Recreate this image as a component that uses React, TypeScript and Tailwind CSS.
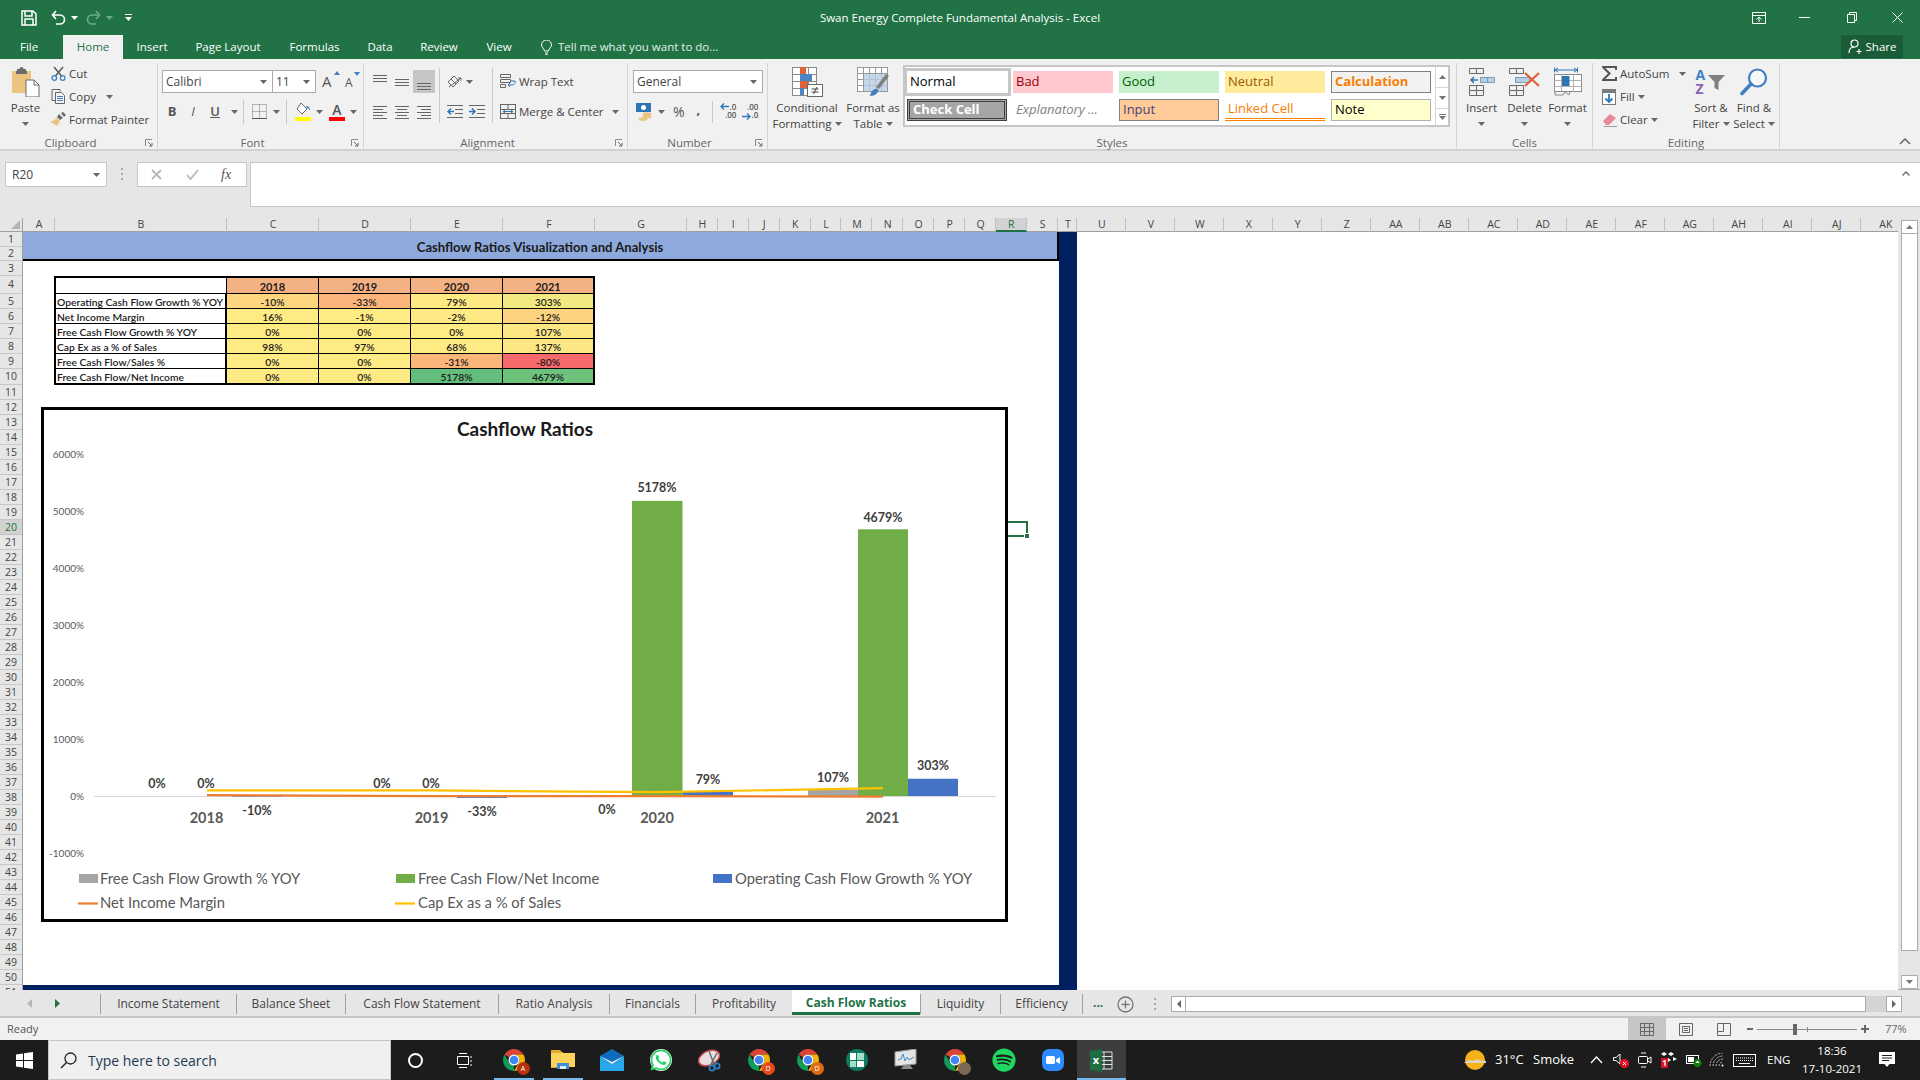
import React from "react";
import { FaWhatsapp, FaSpotify } from "react-icons/fa";

const Caret = ({ c = "#666" }: { c?: string }) => (
  <svg width="7" height="4" viewBox="0 0 7 4" className="shrink-0"><path d="M0 0h7L3.5 4z" fill={c} /></svg>
);

const Launcher = () => (
  <svg width="8" height="8" viewBox="0 0 8 8" className="absolute right-[4px] bottom-[3px]">
    <path d="M.5 7V.5H7" fill="none" stroke="#8a8a8a" />
    <path d="M3 3l4 4M7 4v3H4" fill="none" stroke="#6a6a6a" />
  </svg>
);

const Group = ({ w, label, launcher, children }: { w: string; label: string; launcher?: boolean; children: React.ReactNode }) => (
  <div className={`${w} h-[87px] mt-[4px] shrink-0 border-r border-[#d4d4d4] flex flex-col relative`}>
    <div className="h-[73px] flex">{children}</div>
    <div className={`h-[14px] leading-[14px] text-center text-[#666] text-[11.5px] ${launcher ? "pr-[16px]" : ""}`}>{label}</div>
    {launcher && <Launcher />}
  </div>
);

const Big = ({ w, icon, l1, l2, caret2 }: { w: string; icon: React.ReactNode; l1: string; l2?: string; caret2?: boolean }) => (
  <div className={`${w} flex flex-col items-center shrink-0`}>
    <div className="h-[30px] mt-[4px] flex items-center justify-center">{icon}</div>
    <div className="mt-[3px] leading-[16px] whitespace-nowrap">{l1}</div>
    <div className="leading-[16px] h-[16px] whitespace-nowrap flex items-center gap-[3px]">
      {l2}
      {caret2 !== false && <Caret />}
    </div>
  </div>
);

const Small = ({ icon, text, caret, caretGap = "ml-[3px]" }: { icon: React.ReactNode; text: string; caret?: boolean; caretGap?: string }) => (
  <div className="h-[23px] flex items-center whitespace-nowrap">
    <span className="w-[18px] mr-[2px] flex justify-center">{icon}</span>
    <span>{text}</span>
    {caret && <span className={caretGap}><Caret /></span>}
  </div>
);

const Lines = ({ ys, offs }: { ys: number[]; offs: number[][] }) => (
  <svg width="18" height="16" viewBox="0 0 18 16">
    {ys.map((y, i) => (
      <path key={i} d={`M${offs[i][0]} ${y}.5H${offs[i][1]}`} stroke="#666" strokeWidth="1" />
    ))}
  </svg>
);

const Clip = () => (
  <svg width="29" height="30" viewBox="0 0 29 30">
    <path d="M1 4h19v22H2a1 1 0 0 1-1-1z" fill="#EBC57F" />
    <path d="M6 4h9V2H12.5a2 2 0 0 0-4 0H6z" fill="#6b6b6b" />
    <rect x="5" y="4" width="11" height="3" fill="#6b6b6b" />
    <path d="M15 13h8l5 5v12H15z" fill="#fff" stroke="#6a6a6a" />
    <path d="M23 13v5h5" fill="none" stroke="#6a6a6a" />
  </svg>
);
const Scissors = () => (
  <svg width="15" height="15" viewBox="0 0 15 15">
    <path d="M3 1l7.5 9M12 1L4.5 10" stroke="#5f5f5f" strokeWidth="1.6" fill="none" />
    <circle cx="3.3" cy="12" r="2.3" fill="none" stroke="#3f7fc0" strokeWidth="1.3" />
    <circle cx="11.7" cy="12" r="2.3" fill="none" stroke="#3f7fc0" strokeWidth="1.3" />
  </svg>
);
const Copy = () => (
  <svg width="15" height="15" viewBox="0 0 15 15" fill="none" stroke="#666">
    <path d="M9 2.5V.5H1v11h3" />
    <path d="M4.5 3.5h6l3 3v8h-9z" fill="#f4f4f4" />
    <path d="M6 7.5h6M6 9.5h6M6 11.5h6" stroke="#3f7fc0" />
  </svg>
);
const Painter = () => (
  <svg width="16" height="15" viewBox="0 0 16 15">
    <path d="M9 2l4 4-3 2-3-3z" fill="#6a6a6a" />
    <path d="M11 1l2-1 3 3-2 2z" fill="#6a6a6a" />
    <path d="M6.5 5.5l3.5 3.5-3 5-7-4.5c3 0 5-1.5 6.5-4z" fill="#EBC57F" />
  </svg>
);
const CondIcon = () => (
  <svg width="31" height="30" viewBox="0 0 31 30">
    <g fill="#fff" stroke="#8a8a8a">
      {[0, 7, 14, 21].map((y) => [0, 8, 16].map((x) => <rect key={`${x}-${y}`} x={x + 0.5} y={y + 0.5} width="8" height="7" />))}
    </g>
    <rect x="8" y="0" width="6" height="7" fill="#E0623B" />
    <rect x="8" y="7" width="12" height="7" fill="#4a86c6" />
    <rect x="8" y="14" width="8" height="7" fill="#E0623B" />
    <rect x="8" y="21" width="4" height="7" fill="#4a86c6" />
    <rect x="15.5" y="17.5" width="15" height="12" fill="#fff" stroke="#6a6a6a" />
    <path d="M19.5 22h7M19.5 25h7M25 20l-3.500 7" fill="none" stroke="#444" />
  </svg>
);
const TableIcon = () => (
  <svg width="32" height="30" viewBox="0 0 32 30">
    <g fill="#fff" stroke="#9a9a9a">
      {[0, 6, 12, 18].map((y) => [0, 6, 12, 18, 24].map((x) => <rect key={`${x}-${y}`} x={x + 0.5} y={y + 0.5} width="6" height="6" />))}
    </g>
    <rect x="7" y="7" width="23" height="17" fill="#B9CDE5" opacity=".8" />
    <path d="M19 20l10-13 3 2-10 13z" fill="#7f7f7f" />
    <path d="M13 29c1-5 4-8 8-7 1 4-3 7-8 7z" fill="#3f7fc0" />
  </svg>
);
const InsertIcon = () => (
  <svg width="27" height="28" viewBox="0 0 27 28" fill="none" stroke="#6a6a6a">
    <path d="M1.5.5h14v5h-14zM8.5.5v5M1.5 17.5h14v10h-14zM1.5 22.5h14M8.5 17.5v10" />
    <path d="M12.5 9.5h14v5h-14zM19.5 9.5v5" fill="#B9CDE5" stroke="#7a9cc0" />
    <path d="M10 12H3M6 9l-3 3 3 3" stroke="#2f75b5" strokeWidth="1.5" />
  </svg>
);
const DeleteIcon = () => (
  <svg width="32" height="28" viewBox="0 0 32 28" fill="none" stroke="#6a6a6a">
    <path d="M.5.5h14v5H.5zM7.5.5v5M.5 17.5h14v10H.5zM.5 22.5h14M7.5 17.5v10" />
    <rect x="6.5" y="9.5" width="14" height="5" fill="#B9CDE5" stroke="#7a9cc0" />
    <path d="M16 5l14 13M30 5L16 18" stroke="#E0623B" strokeWidth="2.2" />
  </svg>
);
const FormatIcon = () => (
  <svg width="28" height="30" viewBox="0 0 28 30" fill="none">
    <path d="M1 3h22M1 3l3-2M1 3l3 2M23 3l-3-2M23 3l-3 2" stroke="#2f75b5" />
    <path d="M.5.5v5M23.5.5v5" stroke="#2f75b5" />
    <rect x=".5" y="7.5" width="27" height="17" fill="#fff" stroke="#8a8a8a" />
    <path d="M7.5 7.5v17M19.5 7.5v17M.5 13.5h27M.5 19.5h27" stroke="#b0b0b0" />
    <rect x="8" y="9" width="7.5" height="10" fill="#2f75b5" />
    <path d="M1 25v3h8l2-3 4 3 1-3" stroke="#8a8a8a" />
  </svg>
);
const Sigma = () => (
  <svg width="15" height="15" viewBox="0 0 15 15"><path d="M14 4V1H1l6.5 6.5L1 14h13v-3" fill="none" stroke="#555" strokeWidth="2" /></svg>
);
const FillIcon = () => (
  <svg width="14" height="16" viewBox="0 0 14 16" fill="none">
    <rect x=".5" y=".5" width="13" height="15" fill="#fff" stroke="#7a7a7a" />
    <rect x="1" y="1" width="12" height="3" fill="#7a7a7a" />
    <path d="M7 5v8M3.5 9.5L7 13l3.5-3.5" stroke="#2f75b5" strokeWidth="1.8" />
  </svg>
);
const Eraser = () => (
  <svg width="15" height="14" viewBox="0 0 15 14">
    <path d="M1 8l7-7 6 4-7 7H4z" fill="#E88A9C" />
    <path d="M2 13.5h13" stroke="#999" />
  </svg>
);
const SortIcon = () => (
  <div className="w-[31px] h-[28px] relative flex flex-col text-[14px] font-bold leading-[14px]">
    <span className="text-[#3f7fc0]">A</span>
    <span className="text-[#8e62b5]">Z</span>
    <svg width="17" height="15" viewBox="0 0 17 15" className="absolute left-[12px] top-[7px]"><path d="M0 0h17l-6.500 7v8l-4-2V7z" fill="#7f7f7f" /></svg>
  </div>
);
const FindIcon = () => (
  <svg width="28" height="28" viewBox="0 0 28 28" fill="none">
    <circle cx="17.5" cy="10" r="8.5" stroke="#3f7fc0" strokeWidth="2.2" fill="#fff" fillOpacity=".5" />
    <path d="M11 16L2 25.5" stroke="#3f7fc0" strokeWidth="3.5" strokeLinecap="round" />
  </svg>
);
const BorderIcon = () => (
  <svg width="15" height="15" viewBox="0 0 15 15" fill="none" stroke="#777" strokeDasharray="1 1">
    <path d="M.5.5h14v14H.5zM7.5.5v14M.5 7.5h14" />
    <path d="M0 14.5h15" strokeDasharray="none" stroke="#555" />
  </svg>
);
const Bucket = () => (
  <svg width="16" height="19" viewBox="0 0 16 19">
    <path d="M6 1l6 6-5 5-5-5z" fill="#fff" stroke="#666" />
    <path d="M11 4c3 0 4 2 4 5-1-2-2-3-3-3z" fill="#3f7fc0" />
    <rect y="15" width="16" height="4" fill="#FFFF00" />
  </svg>
);
const FontColor = () => (
  <div className="w-[16px] h-[19px] relative flex flex-col items-center">
    <span className="text-[14px] font-semibold leading-[15px] text-[#555]">A</span>
    <div className="w-[16px] h-[4px] bg-[#FF0000]" />
  </div>
);
const Orient = () => (
  <svg width="16" height="14" viewBox="0 0 16 14" fill="none" stroke="#666">
    <path d="M1 7l6-6 5 5-6 6z" />
    <path d="M4 4l5 5M2 12l12-9M14 3l-3 0M14 3l0 3" />
  </svg>
);
const Indent = ({ out }: { out?: boolean }) => (
  <svg width="16" height="13" viewBox="0 0 16 13" fill="none">
    <path d="M0 .5h16M8 4.5h8M8 8.5h8M0 12.5h16" stroke="#666" />
    {out ? <path d="M7 6.5H1M4 3.5l-3 3 3 3" stroke="#2f75b5" strokeWidth="1.5" /> : <path d="M0 6.5h6M3 3.5l3 3-3 3" stroke="#2f75b5" strokeWidth="1.5" />}
  </svg>
);
const Wrap = () => (
  <svg width="16" height="15" viewBox="0 0 16 15" fill="none">
    <path d="M.5.5h10v3H.5zM.5 5.5h10v3H.5zM.5 10.5h5v3H.5z" stroke="#666" />
    <path d="M11 7h4c1 2-1 4-3 4H8M10 9l-2 2 2 2" stroke="#2f75b5" />
  </svg>
);
const Merge = () => (
  <svg width="16" height="15" viewBox="0 0 16 15" fill="none" stroke="#666">
    <rect x=".5" y=".5" width="15" height="14" />
    <path d="M.5 5.5h15M.5 9.5h15M8 .5v5M8 9.5v5" />
    <path d="M3 7.5h10M3 7.5l2-1.5M3 7.5l2 1.5M13 7.5l-2-1.5M13 7.5l-2 1.5" stroke="#2f75b5" />
  </svg>
);
const Money = () => (
  <svg width="17" height="18" viewBox="0 0 17 18">
    <rect x="0" y="0" width="15" height="9" fill="#2f75b5" />
    <circle cx="7.5" cy="4.5" r="2.5" fill="#fff" />
    <ellipse cx="11" cy="11" rx="4.5" ry="1.8" fill="#EBC57F" />
    <ellipse cx="11" cy="13.5" rx="4.5" ry="1.8" fill="#EBC57F" />
    <ellipse cx="7" cy="16" rx="4.5" ry="1.8" fill="#EBC57F" />
  </svg>
);
const DecInc = () => (
  <div className="w-[16px] h-[17px] relative text-[8px] leading-[8px] font-semibold text-[#555] flex flex-col items-end">
    <span>.0</span>
    <span>.00</span>
    <svg width="9" height="7" viewBox="0 0 9 7" className="absolute left-0 top-0"><path d="M9 3.5H1M4 .5l-3 3 3 3" fill="none" stroke="#2f75b5" strokeWidth="1.3" /></svg>
  </div>
);
const DecDec = () => (
  <div className="w-[16px] h-[17px] relative text-[8px] leading-[8px] font-semibold text-[#555] flex flex-col items-end">
    <span>.00</span>
    <span>.0</span>
    <svg width="9" height="7" viewBox="0 0 9 7" className="absolute left-0 bottom-0"><path d="M0 3.5h8M5 .5l3 3-3 3" fill="none" stroke="#2f75b5" strokeWidth="1.3" /></svg>
  </div>
);

const styleCells: { t: string; c: string }[] = [
  { t: "Normal", c: "bg-white border-[3px] border-[#c6c6c6] text-black ml-[-3px] mt-[-3px] !h-[28px] w-[107px] pl-[3px]" },
  { t: "Bad", c: "bg-[#FFC7CE] text-[#9C0006] pl-[3px]" },
  { t: "Good", c: "bg-[#C6EFCE] text-[#006100] pl-[3px]" },
  { t: "Neutral", c: "bg-[#FFEB9C] text-[#9C5700] pl-[3px]" },
  { t: "Calculation", c: "bg-[#F2F2F2] border border-[#7F7F7F] text-[#FA7D00] font-bold pl-[3px]" },
  { t: "Check Cell", c: "bg-[#A5A5A5] border-[3px] border-double border-[#3F3F3F] text-white font-bold pl-[3px]" },
  { t: "Explanatory ...", c: "bg-white text-[#7F7F7F] italic pl-[3px]" },
  { t: "Input", c: "bg-[#FFCC99] border border-[#7F7F7F] text-[#3F3F76] pl-[3px]" },
  { t: "Linked Cell", c: "bg-white border-b-[3px] border-double border-[#FF8001] text-[#FA7D00] pl-[3px]" },
  { t: "Note", c: "bg-[#FFFFCC] border border-[#B2B2B2] text-black pl-[3px]" },
];

const Ribbon = () => (
  <div className="h-[92px] bg-[#f1f1f1] border-b-2 border-[#d2d2d2] flex text-[11.5px] text-[#444] shrink-0 box-border">
    <Group w="w-[158px]" label="Clipboard" launcher>
      <div className="w-[49px] pl-[2px]"><Big w="w-[47px]" icon={<Clip />} l1="Paste" /></div>
      <div className="flex flex-col mt-[-1px]">
        <Small icon={<Scissors />} text="Cut" />
        <Small icon={<Copy />} text="Copy" caret caretGap="ml-[10px]" />
        <Small icon={<Painter />} text="Format Painter" />
      </div>
    </Group>
    <Group w="w-[206px]" label="Font" launcher>
      <div className="pt-[7px] pl-[4px] flex flex-col gap-[7px] text-[12px]">
        <div className="flex items-center h-[23px]">
          <div className="w-[111px] h-[23px] bg-white border border-[#ababab] flex items-center justify-between px-[3px]"><span>Calibri</span><span className="mr-[2px]"><Caret /></span></div>
          <div className="w-[43px] h-[23px] bg-white border border-[#ababab] border-l-0 flex items-center justify-between px-[3px]"><span>11</span><span className="mr-[2px]"><Caret /></span></div>
          <span className="ml-[6px] text-[15px] text-[#555] relative w-[15px]">A<svg width="6" height="4" viewBox="0 0 6 4" className="absolute right-[-3px] top-[1px]"><path d="M0 4h6L3 0z" fill="#3f7fc0" /></svg></span>
          <span className="ml-[8px] text-[12px] text-[#555] relative w-[13px] mt-[2px]">A<svg width="6" height="4" viewBox="0 0 6 4" className="absolute right-[-2px] top-[-2px]"><path d="M0 0h6L3 4z" fill="#3f7fc0" /></svg></span>
        </div>
        <div className="flex items-center h-[23px] text-[#555]">
          <span className="w-[20px] text-center font-bold text-[13px]">B</span>
          <span className="w-[22px] text-center italic text-[13px]">I</span>
          <span className="w-[22px] text-center underline font-semibold text-[13px]">U</span>
          <span className="ml-[5px]"><Caret /></span>
          <div className="w-px h-[24px] bg-[#c8c8c8] ml-[5px]" />
          <span className="ml-[8px]"><BorderIcon /></span>
          <span className="ml-[6px]"><Caret /></span>
          <div className="w-px h-[24px] bg-[#c8c8c8] ml-[6px]" />
          <span className="ml-[8px]"><Bucket /></span>
          <span className="ml-[5px]"><Caret /></span>
          <span className="ml-[6px]"><FontColor /></span>
          <span className="ml-[5px]"><Caret /></span>
        </div>
      </div>
    </Group>
    <Group w="w-[264px]" label="Alignment" launcher>
      <div className="pt-[7px] pl-[5px] flex flex-col gap-[7px]">
        <div className="flex h-[23px]">
          <div className="w-[22px] flex items-center justify-center"><Lines ys={[1, 4, 7]} offs={[[2, 16], [2, 16], [2, 16]]} /></div>
          <div className="w-[22px] flex items-center justify-center"><Lines ys={[5, 8, 11]} offs={[[2, 16], [2, 16], [2, 16]]} /></div>
          <div className="w-[22px] bg-[#c6c6c6] flex items-center justify-center"><Lines ys={[9, 12, 15]} offs={[[2, 16], [2, 16], [2, 16]]} /></div>
        </div>
        <div className="flex h-[23px]">
          <div className="w-[22px] flex items-center justify-center"><Lines ys={[2, 5, 8, 11, 14]} offs={[[2, 16], [2, 12], [2, 16], [2, 12], [2, 16]]} /></div>
          <div className="w-[22px] flex items-center justify-center"><Lines ys={[2, 5, 8, 11, 14]} offs={[[2, 16], [4, 14], [2, 16], [4, 14], [2, 16]]} /></div>
          <div className="w-[22px] flex items-center justify-center"><Lines ys={[2, 5, 8, 11, 14]} offs={[[2, 16], [6, 16], [2, 16], [6, 16], [2, 16]]} /></div>
        </div>
      </div>
      <div className="w-px h-[55px] bg-[#c8c8c8] mt-[5px] ml-[4px]" />
      <div className="pt-[7px] pl-[7px] w-[52px] flex flex-col gap-[7px]">
        <div className="h-[23px] flex items-center gap-[3px]"><Orient /><Caret /></div>
        <div className="h-[23px] flex items-center gap-[6px]"><Indent out /><Indent /></div>
      </div>
      <div className="w-px h-[55px] bg-[#c8c8c8] mt-[5px]" />
      <div className="pt-[7px] pl-[7px] flex flex-col gap-[7px]">
        <div className="h-[23px] flex items-center gap-[3px] whitespace-nowrap"><Wrap /><span>Wrap Text</span></div>
        <div className="h-[23px] flex items-center gap-[3px] whitespace-nowrap"><Merge /><span>Merge &amp; Center</span><span className="ml-[5px]"><Caret /></span></div>
      </div>
    </Group>
    <Group w="w-[140px]" label="Number" launcher>
      <div className="pt-[7px] pl-[5px] flex flex-col gap-[7px] text-[12px]">
        <div className="w-[130px] h-[23px] bg-white border border-[#ababab] flex items-center justify-between px-[3px]"><span>General</span><span className="mr-[2px]"><Caret /></span></div>
        <div className="h-[23px] flex items-center text-[#555]">
          <span className="ml-[3px]"><Money /></span>
          <span className="ml-[5px]"><Caret /></span>
          <span className="ml-[8px] text-[14px]">%</span>
          <span className="ml-[12px] font-bold text-[13px] mt-[-4px]">,</span>
          <div className="w-px h-[22px] bg-[#c8c8c8] ml-[12px] mr-[7px]" />
          <DecInc />
          <span className="ml-[6px]"><DecDec /></span>
        </div>
      </div>
    </Group>
    <Group w="w-[689px]" label="Styles">
      <Big w="w-[78px]" icon={<CondIcon />} l1="Conditional" l2="Formatting" />
      <Big w="w-[54px]" icon={<TableIcon />} l1="Format as" l2="Table" />
      <div className="ml-[3px] mt-[2px] w-[547px] h-[62px] bg-white border-2 border-[#c6c6c6] flex text-[13px]">
        <div className="w-[530px] pl-[2px] pt-[4px] grid grid-cols-[100px_100px_100px_100px_100px] grid-rows-[22px_22px] gap-x-[6px] gap-y-[6px]">
          {styleCells.map((s) => (
            <div key={s.t} className={`${s.c} h-[22px] flex items-center whitespace-nowrap overflow-hidden box-border`}>{s.t}</div>
          ))}
        </div>
        <div className="flex-1 flex flex-col border-l border-[#d8d8d8]">
          <div className="h-[21px] border-b border-[#d8d8d8] flex items-center justify-center"><svg width="7" height="4" viewBox="0 0 7 4"><path d="M0 4h7L3.5 0z" fill="#777" /></svg></div>
          <div className="h-[21px] border-b border-[#d8d8d8] flex items-center justify-center"><Caret c="#777" /></div>
          <div className="flex-1 flex flex-col items-center justify-center gap-[1px]"><div className="w-[7px] h-px bg-[#777]" /><Caret c="#777" /></div>
        </div>
      </div>
    </Group>
    <Group w="w-[136px]" label="Cells">
      <div className="pl-[3px] flex">
        <Big w="w-[43px]" icon={<InsertIcon />} l1="Insert" />
        <Big w="w-[43px]" icon={<DeleteIcon />} l1="Delete" />
        <Big w="w-[43px]" icon={<FormatIcon />} l1="Format" />
      </div>
    </Group>
    <Group w="w-[187px]" label="Editing">
      <div className="w-[95px] pl-[7px] flex flex-col mt-[-1px]">
        <Small icon={<Sigma />} text="AutoSum" caret caretGap="ml-[10px]" />
        <Small icon={<FillIcon />} text="Fill" caret />
        <Small icon={<Eraser />} text="Clear" caret />
      </div>
      <Big w="w-[46px]" icon={<SortIcon />} l1="Sort &" l2="Filter" />
      <Big w="w-[40px]" icon={<FindIcon />} l1="Find &" l2="Select" />
    </Group>
    <div className="flex-1 flex items-end justify-end pr-[9px] pb-[4px]">
      <svg width="12" height="7" viewBox="0 0 12 7"><path d="M1 6l5-5 5 5" fill="none" stroke="#666" strokeWidth="1.5" /></svg>
    </div>
  </div>
);

const TitleBar = () => (
  <div className="h-[35px] grid grid-cols-[1fr_auto_1fr] items-center text-white shrink-0">
    <div className="flex items-center pl-[21px]">
      <svg width="16" height="16" viewBox="0 0 16 16" fill="none" stroke="#fff" strokeWidth="1.5"><path d="M1 1h11l3 3v11H1z" /><path d="M4 1v5h7V1M4 15v-6h8v6" /></svg>
      <svg width="15" height="15" viewBox="0 0 15 15" fill="none" stroke="#fff" strokeWidth="1.6" className="ml-[14px]"><path d="M5 1L1.5 5 5 9M2 5h7a4.5 4.5 0 0 1 0 9H5" /></svg>
      <span className="ml-[5px]"><Caret c="#fff" /></span>
      <svg width="15" height="15" viewBox="0 0 15 15" fill="none" stroke="#6fa98a" strokeWidth="1.6" className="ml-[8px]"><path d="M10 1l3.5 4L10 9M13 5H6a4.5 4.5 0 0 0 0 9h4" /></svg>
      <span className="ml-[5px]"><Caret c="#6fa98a" /></span>
      <svg width="7" height="8" viewBox="0 0 7 8" className="ml-[12px]"><path d="M0 0h7v1H0zM0 3h7L3.5 7z" fill="#fff" /></svg>
    </div>
    <div className="text-[11.5px] whitespace-nowrap">Swan Energy Complete Fundamental Analysis - Excel</div>
    <div className="flex items-center justify-end">
      <svg width="14" height="12" viewBox="0 0 14 12" fill="none" stroke="#fff" className="mr-[33px]"><path d="M.5.5h13v11H.5zM.5 3.5h13M7 10V5M4.5 7.5L7 5l2.5 2.5" /></svg>
      <svg width="11" height="1" viewBox="0 0 11 1" className="mr-[37px]"><path d="M0 .5h11" stroke="#fff" /></svg>
      <svg width="10" height="11" viewBox="0 0 10 11" fill="none" stroke="#fff" className="mr-[35px]"><path d="M.5 2.5h7v8h-7zM2.5 2.5v-2h7v8h-2" /></svg>
      <svg width="11" height="11" viewBox="0 0 11 11" stroke="#fff" className="mr-[17px]"><path d="M.5.5l10 10M10.5.5l-10 10" /></svg>
    </div>
  </div>
);

const tabs: { t: string; w: string }[] = [
  { t: "Insert", w: "w-[58px]" },
  { t: "Page Layout", w: "w-[94px]" },
  { t: "Formulas", w: "w-[79px]" },
  { t: "Data", w: "w-[52px]" },
  { t: "Review", w: "w-[66px]" },
  { t: "View", w: "w-[54px]" },
];

const TabsRow = () => (
  <div className="h-[24px] flex text-white text-[11.5px] shrink-0">
    <div className="w-[63px] pl-[20px] leading-[24px]">File</div>
    <div className="w-[60px] bg-[#f1f1f1] text-[#217346] text-center leading-[24px]">Home</div>
    {tabs.map((t) => (
      <div key={t.t} className={`${t.w} text-center leading-[24px]`}>{t.t}</div>
    ))}
    <div className="ml-[15px] flex items-center gap-[6px] text-[#e2efe8]">
      <svg width="11" height="15" viewBox="0 0 11 15" fill="none" stroke="#fff"><path d="M3.5 11C3 8 .5 7.5.5 5a5 5 0 0 1 10 0c0 2.5-2.5 3-3 6zM4 13h3M4.5 14.5h2" /></svg>
      <span>Tell me what you want to do...</span>
    </div>
    <div className="ml-auto mr-[17px] w-[62px] h-[23px] bg-[#1b5c38] flex items-center justify-center gap-[3px]">
      <svg width="15" height="15" viewBox="0 0 15 15" fill="none" stroke="#fff" strokeWidth="1.2"><circle cx="6.5" cy="4.5" r="3.5" /><path d="M1 14c0-4 2-6 5.5-6M11 10v5M8.5 12.5h5" /></svg>
      <span>Share</span>
    </div>
  </div>
);

const FormulaRow = () => (
  <div className="h-[67px] bg-[#e6e6e6] flex shrink-0 pt-[11px] pl-[5px] text-[12px]">
    <div className="w-[102px] h-[25px] bg-white border border-[#c6c6c6] flex items-center justify-between pl-[6px] pr-[6px] text-[#444]">
      <span>R20</span>
      <Caret />
    </div>
    <div className="w-[30px] h-[25px] flex items-center justify-center">
      <svg width="2" height="13" viewBox="0 0 2 13"><path d="M1 0v13" stroke="#aaa" strokeWidth="2" strokeDasharray="2 3" /></svg>
    </div>
    <div className="w-[110px] h-[25px] bg-white border border-[#c6c6c6] flex items-center text-[#b0b0b0]">
      <svg width="11" height="11" viewBox="0 0 11 11" className="ml-[13px]"><path d="M1 1l9 9M10 1l-9 9" stroke="#b8b8b8" strokeWidth="1.8" /></svg>
      <svg width="13" height="11" viewBox="0 0 13 11" className="ml-[24px]"><path d="M1 6l3.5 4L12 1" fill="none" stroke="#b8b8b8" strokeWidth="1.8" /></svg>
      <span className="ml-[22px] italic font-['Liberation_Serif',serif] text-[14px] text-[#555]">fx</span>
    </div>
    <div className="ml-[3px] flex-1 h-[45px] bg-white border border-[#c6c6c6] border-r-0 flex justify-end pr-[10px] pt-[8px]">
      <svg width="8" height="5" viewBox="0 0 8 5"><path d="M.5 4.5L4 1l3.5 3.5" fill="none" stroke="#666" strokeWidth="1.3" /></svg>
    </div>
  </div>
);

const columns: { l: string; w: string; s?: boolean }[] = [
  { l: "A", w: "w-[32px]" }, { l: "B", w: "w-[172px]" }, { l: "C", w: "w-[92px]" }, { l: "D", w: "w-[92px]" },
  { l: "E", w: "w-[92px]" }, { l: "F", w: "w-[92px]" }, { l: "G", w: "w-[92px]" },
  { l: "H", w: "w-[30.9px]" }, { l: "I", w: "w-[30.9px]" }, { l: "J", w: "w-[30.9px]" }, { l: "K", w: "w-[30.9px]" },
  { l: "L", w: "w-[30.9px]" }, { l: "M", w: "w-[30.9px]" }, { l: "N", w: "w-[30.9px]" }, { l: "O", w: "w-[30.9px]" },
  { l: "P", w: "w-[30.9px]" }, { l: "Q", w: "w-[30.9px]" }, { l: "R", w: "w-[30.9px]", s: true }, { l: "S", w: "w-[31.5px]" },
  { l: "T", w: "w-[19px]" }, { l: "U", w: "w-[49px]" }, { l: "V", w: "w-[49px]" }, { l: "W", w: "w-[49px]" }, { l: "X", w: "w-[49px]" },
  { l: "Y", w: "w-[49px]" }, { l: "Z", w: "w-[49px]" }, { l: "AA", w: "w-[49px]" }, { l: "AB", w: "w-[49px]" }, { l: "AC", w: "w-[49px]" },
  { l: "AD", w: "w-[49px]" }, { l: "AE", w: "w-[49px]" }, { l: "AF", w: "w-[49px]" }, { l: "AG", w: "w-[49px]" }, { l: "AH", w: "w-[49px]" },
  { l: "AI", w: "w-[49px]" }, { l: "AJ", w: "w-[49px]" }, { l: "AK", w: "w-[49px]" },
];

const rowH = (n: number) => (n <= 2 ? "h-[14.5px]" : n === 4 ? "h-[18px]" : n === 10 ? "h-[16px]" : "h-[15px]");
const rows = Array.from({ length: 51 }, (_, i) => i + 1);

const tableRows: { label: string; cells: { t: string; c: string }[] }[] = [
  { label: "Operating Cash Flow Growth % YOY", cells: [{ t: "-10%", c: "bg-[#FED680]" }, { t: "-33%", c: "bg-[#FDB57B]" }, { t: "79%", c: "bg-[#FFE983]" }, { t: "303%", c: "bg-[#F3E983]" }] },
  { label: "Net Income Margin", cells: [{ t: "16%", c: "bg-[#FFEB84]" }, { t: "-1%", c: "bg-[#FFEB84]" }, { t: "-2%", c: "bg-[#FFE984]" }, { t: "-12%", c: "bg-[#FED380]" }] },
  { label: "Free Cash Flow Growth % YOY", cells: [{ t: "0%", c: "bg-[#FFEB84]" }, { t: "0%", c: "bg-[#FFEB84]" }, { t: "0%", c: "bg-[#FFEB84]" }, { t: "107%", c: "bg-[#FDE784]" }] },
  { label: "Cap Ex as a % of Sales", cells: [{ t: "98%", c: "bg-[#FFEB84]" }, { t: "97%", c: "bg-[#FFEB84]" }, { t: "68%", c: "bg-[#FFEB84]" }, { t: "137%", c: "bg-[#FDE784]" }] },
  { label: "Free Cash Flow/Sales %", cells: [{ t: "0%", c: "bg-[#FFEB84]" }, { t: "0%", c: "bg-[#FFEB84]" }, { t: "-31%", c: "bg-[#FCB67A]" }, { t: "-80%", c: "bg-[#F8696B]" }] },
  { label: "Free Cash Flow/Net Income", cells: [{ t: "0%", c: "bg-[#FFEB84]" }, { t: "0%", c: "bg-[#FFEB84]" }, { t: "5178%", c: "bg-[#63BE7B]" }, { t: "4679%", c: "bg-[#6FC27C]" }] },
];

const RatioTable = () => (
  <div className="mt-[15px] ml-[31px] w-[541px] bg-black border-2 border-black grid grid-cols-[170px_91px_91px_91px_90px] grid-rows-[15px_14px_14px_14px_14px_14px_14px] gap-[1px] text-[10.3px] text-[#1c1c1c] font-['Lato',sans-serif] leading-[16px] font-semibold overflow-hidden">
    <div className="bg-white mr-[-1px] border-r border-black" />
    {["2018", "2019", "2020", "2021"].map((y) => (
      <div key={y} className="bg-[#F4B183] text-center font-bold text-[11px] leading-[18px]">{y}</div>
    ))}
    {tableRows.map((r) => (
      <React.Fragment key={r.label}>
        <div className="bg-white pl-[1px] whitespace-nowrap overflow-hidden border-r border-black">{r.label}</div>
        {r.cells.map((c, i) => (
          <div key={i} className={`${c.c} text-center overflow-hidden`}>{c.t}</div>
        ))}
      </React.Fragment>
    ))}
  </div>
);

const Y = (v: number) => 796 - v * 0.057;
const cats = [207, 432, 657.5, 883];

const ChartSvg = () => {
  const labels: [number, number, string][] = [
    [157, 788, "0%"], [206, 788, "0%"], [257, 815, "-10%"], [382, 788, "0%"], [431, 788, "0%"], [482, 816, "-33%"],
    [607, 814, "0%"], [657, 492, "5178%"], [708, 784, "79%"], [833, 782, "107%"], [883, 522, "4679%"], [933, 770, "303%"],
  ];
  return (
    <svg width="961" height="509" viewBox="44 410 961 509" className="block font-['Lato',sans-serif]">
      <text x="525" y="436" textAnchor="middle" fontSize="19" fontWeight="700" fill="#1a1a1a">Cashflow Ratios</text>
      {[6000, 5000, 4000, 3000, 2000, 1000, 0, -1000].map((v) => (
        <text key={v} x="84" y={Y(v) + 3.5} textAnchor="end" fontSize="10" fill="#595959">{v}%</text>
      ))}
      <path d="M94 796.5H996" stroke="#d9d9d9" />
      <rect x="632" y={Y(5178)} width="50.5" height={5178 * 0.057} fill="#70AD47" />
      <rect x="858" y={Y(4679)} width="50" height={4679 * 0.057} fill="#70AD47" />
      <rect x="808" y={Y(107)} width="50" height={107 * 0.057} fill="#A5A5A5" />
      <rect x="682.5" y={Y(79)} width="50.5" height={79 * 0.057} fill="#4472C4" />
      <rect x="908" y={Y(303)} width="50" height={303 * 0.057} fill="#4472C4" />
      <rect x="232" y="796" width="50" height={10 * 0.057} fill="#4472C4" />
      <rect x="457" y="796" width="50" height={33 * 0.057} fill="#4472C4" />
      <polyline points={[16, -1, -2, -12].map((v, i) => `${cats[i]},${Y(v)}`).join(" ")} fill="none" stroke="#ED7D31" strokeWidth="2.2" />
      <polyline points={[98, 97, 68, 137].map((v, i) => `${cats[i]},${Y(v)}`).join(" ")} fill="none" stroke="#FFC000" strokeWidth="2.2" />
      {labels.map(([x, y, t], i) => (
        <text key={i} x={x} y={y} textAnchor="middle" fontSize="12.5" fontWeight="700" fill="#404040">{t}</text>
      ))}
      {["2018", "2019", "2020", "2021"].map((t, i) => (
        <text key={t} x={cats[i] - 0.5} y="823" textAnchor="middle" fontSize="14.5" fontWeight="700" fill="#595959">{t}</text>
      ))}
      <g fontSize="14.8" fill="#595959">
        <rect x="79" y="874" width="19" height="9" fill="#A5A5A5" />
        <text x="100" y="884">Free Cash Flow Growth % YOY</text>
        <rect x="396" y="874" width="19" height="9" fill="#70AD47" />
        <text x="418" y="884">Free Cash Flow/Net Income</text>
        <rect x="713" y="874" width="19" height="9" fill="#4472C4" />
        <text x="735" y="884">Operating Cash Flow Growth % YOY</text>
        <path d="M78 903.5h20" stroke="#ED7D31" strokeWidth="2.2" />
        <text x="100" y="908">Net Income Margin</text>
        <path d="M395 903.5h20" stroke="#FFC000" strokeWidth="2.2" />
        <text x="418" y="908">Cap Ex as a % of Sales</text>
      </g>
    </svg>
  );
};

const Sheet = () => (
  <div className="flex-1 min-w-0 flex flex-col">
    <div className="h-[14px] flex bg-[#e6e6e6] shrink-0 overflow-hidden">
      <div className="w-[23px] h-full shrink-0 border-b border-r border-[#9f9f9f] flex items-end justify-end pr-[2px] pb-[2px]">
        <svg width="9" height="9" viewBox="0 0 9 9"><path d="M9 0v9H0z" fill="#b4b4b4" /></svg>
      </div>
      {columns.map((c) => (
        <div key={c.l} className={`${c.w} shrink-0 h-full flex items-center justify-center pl-px text-[10.5px] leading-none border-r box-border ${c.s ? "bg-[#d2d2d2] text-[#217346] border-[#c0c0c0] border-b-2 border-b-[#217346]" : "text-[#444] border-[#c0c0c0] border-b border-b-[#9f9f9f]"}`}>{c.l}</div>
      ))}
    </div>
    <div className="flex-1 min-h-0 flex bg-white overflow-hidden">
      <div className="w-[23px] shrink-0 bg-[#e6e6e6] border-r border-[#9f9f9f] flex flex-col box-border">
        {rows.map((n) => (
          <div key={n} className={`${rowH(n)} shrink-0 flex items-center justify-center text-[10.5px] leading-none border-b box-border ${n === 20 ? "bg-[#d2d2d2] text-[#217346] border-[#c0c0c0]" : "text-[#444] border-[#c8c8c8]"}`}>{n}</div>
        ))}
      </div>
      <div className="w-[1036px] shrink-0 flex flex-col relative">
        <div className="h-[29px] shrink-0 bg-[#8EA9DB] border-b-2 border-r-2 border-black flex items-center justify-center pt-[4px] font-['Lato',sans-serif] font-bold text-[13.1px] text-[#1a1a1a] box-border">Cashflow Ratios Visualization and Analysis</div>
        <RatioTable />
        <div className="absolute left-[974px] top-[288.5px] w-[31px] h-[16px] border-2 border-[#217346] box-border">
          <div className="absolute right-[-4px] bottom-[-4px] w-[6px] h-[6px] bg-[#217346] border border-white" />
        </div>
        <div className="relative mt-[21.5px] ml-[18px] w-[967px] h-[515px] bg-white border-[3px] border-black box-border">
          <ChartSvg />
        </div>
        <div className="mt-auto h-[5px] w-full bg-[#002060]" />
      </div>
      <div className="w-[18px] shrink-0 bg-[#002060]" />
      <div className="flex-1 bg-white" />
    </div>
  </div>
);

const VScroll = () => (
  <div className="w-[22px] shrink-0 bg-[#e6e6e6] flex flex-col items-center pt-[2px] border-b border-[#ababab]">
    <div className="w-[17px] h-[14px] bg-white border border-[#ababab] flex items-center justify-center"><svg width="7" height="4" viewBox="0 0 7 4"><path d="M0 4h7L3.5 0z" fill="#777" /></svg></div>
    <div className="w-[17px] flex-1 bg-white border border-[#ababab] border-t-0" />
    <div className="w-[17px] h-[14px] mt-[24px] bg-white border border-[#ababab] flex items-center justify-center"><Caret c="#777" /></div>
  </div>
);

const sheetTabs: { t: string; w: string; a?: boolean }[] = [
  { t: "Income Statement", w: "w-[136px]" },
  { t: "Balance Sheet", w: "w-[109px]" },
  { t: "Cash Flow Statement", w: "w-[153px]" },
  { t: "Ratio Analysis", w: "w-[111px]" },
  { t: "Financials", w: "w-[86px]" },
  { t: "Profitability", w: "w-[97px]" },
  { t: "Cash Flow Ratios", w: "w-[128px]", a: true },
  { t: "Liquidity", w: "w-[80px]" },
  { t: "Efficiency", w: "w-[82px]" },
];

const TabBar = () => (
  <div className="h-[28px] shrink-0 bg-[#e6e6e6] border-b-2 border-[#c6c6c6] flex items-start text-[12px] text-[#444] box-border">
    <div className="w-[100px] h-[26px] flex items-center">
      <svg width="5" height="9" viewBox="0 0 5 9" className="ml-[27px]"><path d="M5 0v9L0 4.5z" fill="#b8b8b8" /></svg>
      <svg width="5" height="9" viewBox="0 0 5 9" className="ml-[23px]"><path d="M0 0v9l5-4.5z" fill="#217346" /></svg>
    </div>
    {sheetTabs.map((t) =>
      t.a ? (
        <div key={t.t} className={`${t.w} h-[25px] bg-white border-b-[3px] border-[#217346] text-[#217346] font-bold text-center leading-[25px] whitespace-nowrap box-border`}>{t.t}</div>
      ) : (
        <div key={t.t} className={`${t.w} h-[20px] mt-[4px] border-l border-[#a0a0a0] text-center leading-[20px] whitespace-nowrap box-border`}>{t.t}</div>
      )
    )}
    <div className="h-[20px] mt-[4px] border-l border-[#a0a0a0] flex items-center">
      <span className="ml-[10px] text-[#217346] font-bold leading-none mt-[-2px]">...</span>
      <svg width="17" height="17" viewBox="0 0 17 17" fill="none" stroke="#777" className="ml-[14px]"><circle cx="8.5" cy="8.5" r="7.5" strokeWidth="1.3" /><path d="M8.5 4.5v8M4.5 8.5h8" strokeWidth="1.3" /></svg>
      <svg width="2" height="13" viewBox="0 0 2 13" className="ml-[20px]"><path d="M1 0v13" stroke="#aaa" strokeWidth="2" strokeDasharray="2 3" /></svg>
    </div>
    <div className="ml-[15px] mt-[6px] h-[16px] w-[731px] flex">
      <div className="w-[15px] h-full bg-white border border-[#ababab] flex items-center justify-center"><svg width="4" height="8" viewBox="0 0 4 8"><path d="M4 0v8L0 4z" fill="#666" /></svg></div>
      <div className="w-[680px] h-full bg-white border border-[#ababab] border-l-0" />
      <div className="flex-1 bg-[#d4d4d4]" />
      <div className="w-[16px] h-full bg-white border border-[#ababab] flex items-center justify-center"><svg width="4" height="8" viewBox="0 0 4 8"><path d="M0 0v8l4-4z" fill="#666" /></svg></div>
    </div>
  </div>
);

const StatusBar = () => (
  <div className="h-[22px] shrink-0 bg-[#f1f1f1] flex items-center text-[11px] text-[#555]">
    <span className="ml-[7px]">Ready</span>
    <div className="ml-auto flex items-center h-full">
      <div className="w-[38px] h-full bg-[#c6c6c6] flex items-center justify-center">
        <svg width="14" height="13" viewBox="0 0 14 13" fill="none" stroke="#666"><path d="M.5.5h13v12H.5zM.5 4.5h13M.5 8.5h13M4.5.5v12M9.5.5v12" /></svg>
      </div>
      <div className="w-[39px] flex justify-center">
        <svg width="14" height="13" viewBox="0 0 14 13" fill="none" stroke="#666"><path d="M.5.5h13v12H.5z" /><path d="M3.5 3.5h7v6h-7zM5 5.5h4M5 7.5h4" /></svg>
      </div>
      <div className="w-[38px] flex justify-center">
        <svg width="14" height="13" viewBox="0 0 14 13" fill="none" stroke="#666"><path d="M.5.5h13v12H.5zM.5 8.5h6V.5" /></svg>
      </div>
      <svg width="6" height="2" viewBox="0 0 6 2" className="ml-[4px]"><path d="M0 0h6v2H0z" fill="#666" /></svg>
      <div className="ml-[4px] w-[100px] h-[1px] bg-[#8a8a8a] relative">
        <div className="absolute left-[36px] top-[-5px] w-[4px] h-[11px] bg-[#666]" />
        <div className="absolute left-[50px] top-[-2px] w-px h-[5px] bg-[#8a8a8a]" />
      </div>
      <svg width="8" height="8" viewBox="0 0 8 8" className="ml-[4px]"><path d="M3 0h2v3h3v2H5v3H3V5H0V3h3z" fill="#666" /></svg>
      <span className="ml-[16px] mr-[14px] w-[21px] text-[#6a6a6a] whitespace-nowrap">77%</span>
    </div>
  </div>
);

const Chrome = ({ badge, letter }: { badge?: string; letter?: string }) => (
  <div className="w-[24px] h-[24px] relative">
    <svg width="24" height="24" viewBox="0 0 24 24">
      <path d="M2.5 6.5A11 11 0 0 1 21.5 6.5H12a5.5 5.5 0 0 0-4.76 2.75z" fill="#DB4437" />
      <path d="M21.5 6.5A11 11 0 0 1 12 23l4.76-8.25A5.5 5.5 0 0 0 12 6.5z" fill="#F4B400" />
      <path d="M12 23A11 11 0 0 1 2.5 6.5l4.76 8.25A5.5 5.5 0 0 0 12 17.5z" fill="#0F9D58" />
      <circle cx="12" cy="12" r="5.5" fill="#fff" />
      <circle cx="12" cy="12" r="4.3" fill="#4285F4" />
    </svg>
    {badge && (
      <div className={`absolute right-[-4px] bottom-[-3px] w-[13px] h-[13px] rounded-full ${badge} text-white text-[7px] leading-[13px] text-center`}>{letter}</div>
    )}
  </div>
);

const Folder = () => (
  <svg width="24" height="20" viewBox="0 0 24 20">
    <path d="M0 0h9l2 2h1v16H0z" fill="#E8A92F" />
    <path d="M0 3h24v14H0z" fill="#FBD35A" />
    <path d="M6 19v-6h12v6z" fill="#3A8FD8" />
    <path d="M9 19v-3h6v3z" fill="#DDEEFB" />
  </svg>
);
const Mail = () => (
  <svg width="24" height="22" viewBox="0 0 24 22">
    <path d="M0 7L12 0l12 7-12 8z" fill="#0F6CBD" />
    <path d="M0 7v15h24V7L12 15z" fill="#28A8EA" />
    <path d="M0 7l12 8 12-8-12 6z" fill="#fff" />
  </svg>
);
const Snip = () => (
  <svg width="24" height="24" viewBox="0 0 24 24" fill="none">
    <ellipse cx="11" cy="10" rx="11" ry="7" transform="rotate(-25 11 10)" fill="#E9DFE0" stroke="#C2474E" strokeWidth="1.5" />
    <path d="M11 3l5 13M19 5L13 16" stroke="#666" strokeWidth="1.4" />
    <circle cx="14" cy="20" r="2.6" stroke="#2D7FC1" strokeWidth="1.8" />
    <circle cx="19" cy="18" r="2.6" stroke="#2D7FC1" strokeWidth="1.8" />
  </svg>
);
const CalcIcon = () => (
  <div className="w-[22px] h-[22px] rounded-full bg-[#0E7A5F] flex items-center justify-center">
    <div className="w-[14px] h-[14px] grid grid-cols-2 gap-px">
      <div className="bg-white" /><div className="bg-[#9fe0c7]" /><div className="bg-[#9fe0c7]" /><div className="bg-white" />
    </div>
  </div>
);
const Monitor = () => (
  <svg width="24" height="22" viewBox="0 0 24 22" fill="none">
    <path d="M1 3l21-3v15L1 17z" fill="#E4E4E4" stroke="#999" />
    <path d="M4 11l3-1 2-5 2 7 2-4 2 3 5-3" stroke="#3E8CCB" />
    <path d="M7 20h12l-3-4H10z" fill="#8a8a8a" />
  </svg>
);
const ZoomIcon = () => (
  <div className="w-[22px] h-[22px] rounded-[7px] bg-[#2D8CFF] flex items-center justify-center gap-[1px]">
    <div className="w-[9px] h-[8px] bg-white rounded-[1.5px]" />
    <svg width="4" height="7" viewBox="0 0 4 7"><path d="M0 2.5L4 0v7L0 4.5z" fill="#fff" /></svg>
  </div>
);
const ExcelIcon = () => (
  <div className="w-[23px] h-[23px] relative">
    <svg width="23" height="23" viewBox="0 0 23 23" className="block">
      <path d="M9 3h13v17H9z" fill="none" stroke="#D7E8DF" />
      <path d="M14 3v17M9 7.5h13M9 11.5h13M9 15.5h13" stroke="#D7E8DF" />
      <path d="M0 2l12-2v23L0 21z" fill="#1E6E42" />
    </svg>
    <span className="absolute left-0 top-[3px] w-[12px] text-center text-[11px] font-bold leading-[15px] text-white">x</span>
  </div>
);

const Slot = ({ children, u, a }: { children: React.ReactNode; u?: string; a?: boolean }) => (
  <div className={`w-[49px] h-full shrink-0 flex items-center justify-center relative ${a ? "bg-[#3d3d3d]" : ""}`}>
    {children}
    {u && <div className={`absolute bottom-0 h-[2px] bg-[#76B9ED] ${u}`} />}
  </div>
);

const Taskbar = () => (
  <div className="h-[40px] shrink-0 bg-[#1c1c1c] flex items-center text-white font-['Open_Sans',sans-serif]">
    <div className="w-[48px] flex justify-center">
      <svg width="17" height="17" viewBox="0 0 17 17"><path d="M0 2.4L7 1.4v6.6H0zM8 1.3L17 0v8H8zM0 9h7v6.6l-7-1zM8 9h9v8l-9-1.3z" fill="#fff" /></svg>
    </div>
    <div className="w-[343px] h-full bg-[#f0f0f0] border border-[#c6c6c6] flex items-center text-[#1f3a52] text-[14px]">
      <svg width="17" height="17" viewBox="0 0 17 17" fill="none" stroke="#222" className="ml-[11px]"><circle cx="10.5" cy="6.5" r="5.5" strokeWidth="1.3" /><path d="M6.5 10.5L1 16" strokeWidth="1.5" /></svg>
      <span className="ml-[11px]">Type here to search</span>
    </div>
    <Slot><div className="w-[15px] h-[15px] rounded-full border-2 border-white" /></Slot>
    <Slot><svg width="16" height="15" viewBox="0 0 16 15" fill="none" stroke="#fff"><path d="M2 .5h8M2 14.5h8M.5 3.5h11v8H.5zM14 3v2M14 7v2M14 11v2" /></svg></Slot>
    <Slot u="w-[40px]"><Chrome badge="bg-[#B7320F]" letter="A" /></Slot>
    <Slot u="w-[40px]"><Folder /></Slot>
    <Slot><Mail /></Slot>
    <Slot><span className="text-[#25D366] text-[24px] bg-white rounded-full leading-none w-[22px] h-[22px] flex items-center justify-center"><FaWhatsapp /></span></Slot>
    <Slot><Snip /></Slot>
    <Slot><Chrome badge="bg-[#E8491D]" letter="D" /></Slot>
    <Slot><Chrome badge="bg-[#E06A10]" letter="D" /></Slot>
    <Slot><CalcIcon /></Slot>
    <Slot><Monitor /></Slot>
    <Slot><Chrome badge="bg-[#7a6a55]" letter="" /></Slot>
    <Slot><span className="text-[#1ED760] text-[24px] leading-none"><FaSpotify /></span></Slot>
    <Slot><ZoomIcon /></Slot>
    <Slot a u="w-full"><ExcelIcon /></Slot>
    <div className="ml-auto flex items-center h-full">
      <svg width="24" height="22" viewBox="0 0 24 22" className="mr-[8px]">
        <circle cx="12" cy="11" r="10" fill="#F6B21B" />
        <path d="M2 13c3-2 6-2 8-1 3-2 6-2 8 0h5v2H1z" fill="#D9D4C8" />
      </svg>
      <span className="text-[13px] w-[28px] mr-[10px] whitespace-nowrap">31°C</span>
      <span className="text-[13px] w-[40px] mr-[17px] whitespace-nowrap">Smoke</span>
      <svg width="13" height="8" viewBox="0 0 13 8" fill="none" stroke="#fff" strokeWidth="1.3" className="mr-[10px]"><path d="M1 7l5.5-6L12 7" /></svg>
      <svg width="16" height="16" viewBox="0 0 16 16" fill="none" className="mr-[9px]">
        <path d="M.5 5.5h2.5L7 2v10L3 8.5H.5z" stroke="#fff" />
        <circle cx="11.5" cy="11.5" r="4.5" fill="#E81123" />
        <path d="M10 10l3 3M13 10l-3 3" stroke="#fff" />
      </svg>
      <svg width="14" height="16" viewBox="0 0 14 16" fill="none" stroke="#fff" className="mr-[9px]"><path d="M3 1h5M3 15h5" /><rect x=".5" y="4.5" width="9" height="7" rx="1" /><path d="M10 7l3-2v6l-3-2" /></svg>
      <div className="w-[16px] h-[16px] relative mr-[9px]">
        <svg width="16" height="16" viewBox="0 0 16 16" className="block">
          <path d="M3 0l3 2-3 2-3-2zM10 0l3 2-3 2-3-2zM12 5l4 2-4 2zM7 6l3 2-3 2z" fill="#fff" />
          <rect x="0" y="6" width="7" height="10" fill="#D3112B" />
        </svg>
        <span className="absolute left-0 bottom-0 w-[7px] text-center text-[8px] font-bold leading-[10px] text-white">1</span>
      </div>
      <svg width="16" height="16" viewBox="0 0 16 16" className="mr-[7px]">
        <rect x=".5" y="3.5" width="12" height="8" fill="#1c1c1c" stroke="#fff" />
        <rect x="2" y="5" width="6" height="5" fill="#fff" />
        <circle cx="11.5" cy="11" r="4" fill="#107C10" />
        <path d="M11.5 8.5l2 2.5h-4z" fill="#fff" />
      </svg>
      <svg width="16" height="14" viewBox="0 0 16 14" fill="none" stroke="#bbb" className="mr-[8px]"><path d="M1 13a13 13 0 0 1 13-13M4 13A10 10 0 0 1 14 3M7 13a7 7 0 0 1 7-7M10 13a4 4 0 0 1 4-4" strokeDasharray="2 1" /><circle cx="13.5" cy="12.5" r="1" fill="#fff" stroke="none" /></svg>
      <svg width="23" height="13" viewBox="0 0 23 13" fill="none" stroke="#fff" className="mr-[11px]"><rect x=".5" y=".5" width="22" height="12" /><path d="M3 4h17M3 6.5h17" strokeDasharray="1 1" /><path d="M6 9.5h11" /></svg>
      <span className="text-[11.5px] w-[23px] mr-[12px] whitespace-nowrap">ENG</span>
      <div className="w-[60px] text-center text-[11.5px] leading-[18px] mr-[17px]">
        <div>18:36</div>
        <div>17-10-2021</div>
      </div>
      <svg width="16" height="16" viewBox="0 0 16 16" className="mr-[25px]"><path d="M0 0h16v12h-5.5L8 15l-2.5-3H0z" fill="#fff" /><path d="M3 3.5h10M3 6h10M3 8.5h7" stroke="#1c1c1c" /></svg>
    </div>
  </div>
);

export default function App() {
  return (
    <div className="w-[1920px] h-[1080px] flex flex-col overflow-hidden bg-[#217346] font-['Open_Sans',sans-serif]">
      <TitleBar />
      <TabsRow />
      <Ribbon />
      <FormulaRow />
      <div className="flex-1 min-h-0 flex">
        <Sheet />
        <VScroll />
      </div>
      <TabBar />
      <StatusBar />
      <Taskbar />
    </div>
  );
}
